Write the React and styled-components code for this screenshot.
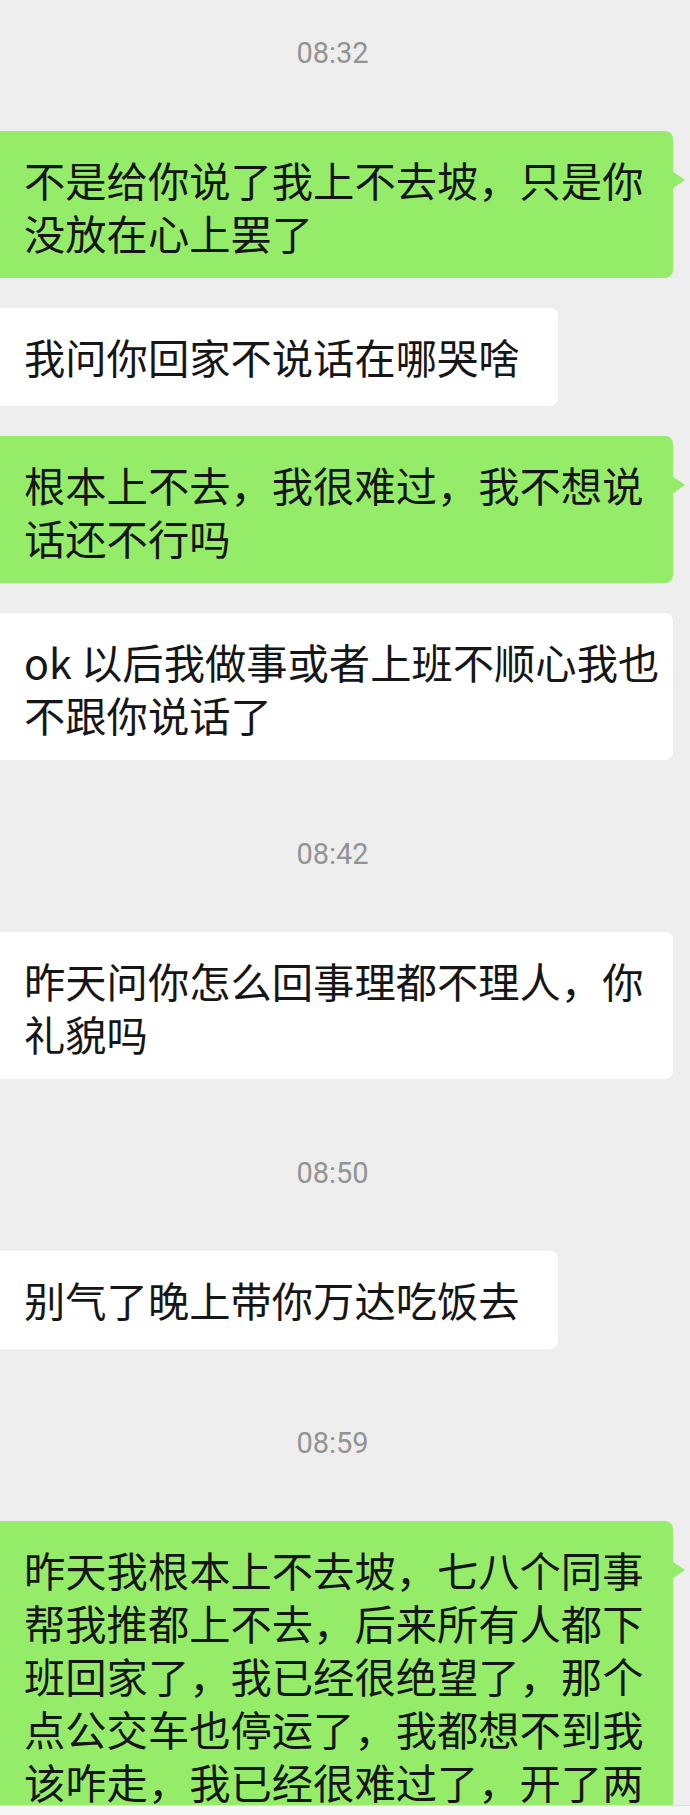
import React from 'react';
import styled, { createGlobalStyle } from 'styled-components';

const GlobalStyle = createGlobalStyle`
  html, body {
    margin: 0;
    padding: 0;
    background: #eeeeee;
  }
  * {
    box-sizing: border-box;
  }
`

const Screen = styled.div`
  width: 690px;
  height: 1815px;
  display: flex;
  flex-direction: column;
  overflow: hidden;
  background: #eeeeee;
`

const ChatList = styled.div`
  flex: 1;
  min-height: 0;
  overflow: hidden;
  display: flex;
  flex-direction: column;
  gap: 30px;
`

const Time = styled.div`
  padding: ${({ first }) => (first ? '36px' : '47px')} 25px 31px 0;
  text-align: center;
  font-family: Roboto, "Liberation Sans", sans-serif;
  font-size: 29px;
  line-height: 34px;
  color: #939393;
`

const Row = styled.div`
  display: flex;
  justify-content: flex-start;
`

const Bubble = styled.div`
  position: relative;
  flex-shrink: 0;
  max-width: 673px;
  min-height: 98px;
  padding: 22px 38px 19px 24px;
  border-radius: 0 8px 8px 0;
  background: ${({ mine }) => (mine ? '#95ec69' : '#ffffff')};
  font-family: "Noto Sans CJK SC", sans-serif;
  font-size: 41.3px;
  line-height: 53px;
  color: #161616;

  ${({ mine }) =>
    mine &&
    `
    &::after {
      content: '';
      position: absolute;
      right: -12px;
      top: 40px;
      border-left: 13px solid #95ec69;
      border-top: 9px solid transparent;
      border-bottom: 9px solid transparent;
    }
  `}
`

const Line = styled.span`
  display: block;
  white-space: nowrap;
`

const InputBar = styled.div`
  flex-shrink: 0;
  height: 10px;
  background: #f7f7f7;
  border-top: 1px solid #dedede;
`

const items = [
  { time: '08:32' },
  { mine: true, lines: ['不是给你说了我上不去坡，只是你', '没放在心上罢了'] },
  { lines: ['我问你回家不说话在哪哭啥'] },
  { mine: true, lines: ['根本上不去，我很难过，我不想说', '话还不行吗'] },
  { lines: ['ok 以后我做事或者上班不顺心我也', '不跟你说话了'] },
  { time: '08:42' },
  { lines: ['昨天问你怎么回事理都不理人，你', '礼貌吗'] },
  { time: '08:50' },
  { lines: ['别气了晚上带你万达吃饭去'] },
  { time: '08:59' },
  {
    mine: true,
    lines: [
      '昨天我根本上不去坡，七八个同事',
      '帮我推都上不去，后来所有人都下',
      '班回家了，我已经很绝望了，那个',
      '点公交车也停运了，我都想不到我',
      '该咋走，我已经很难过了，开了两',
    ],
  },
]

export default function App() {
  return (
    <Screen>
      <GlobalStyle />
      <ChatList>
        {items.map((item, i) =>
          item.time ? (
            <Time key={i} first={i === 0}>{item.time}</Time>
          ) : (
            <Row key={i}>
              <Bubble mine={item.mine}>
                {item.lines.map((l, j) => (
                  <Line key={j}>{l}</Line>
                ))}
              </Bubble>
            </Row>
          )
        )}
      </ChatList>
      <InputBar />
    </Screen>
  );
}
